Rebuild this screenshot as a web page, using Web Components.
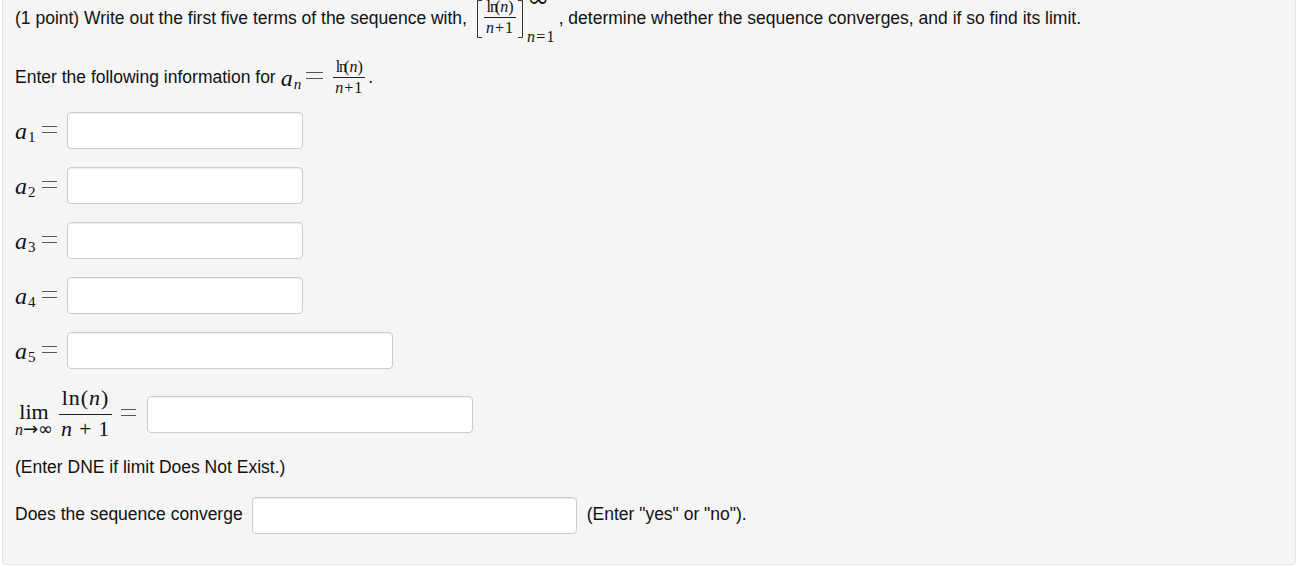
<!DOCTYPE html>
<html>
<head>
<meta charset="utf-8">
<title>Sequence problem</title>
<style>
  html, body { margin:0; padding:0; background:#fff; }
  body { font-family:"Liberation Sans", Arial, sans-serif; font-size:17.5px; color:#111; height:567px; overflow:hidden; }
</style>
</head>
<body>
<hw-well>
  <hw-row style="height:36px">
    <span>(1 point) Write out the first five terms of the sequence with,</span>
    <hw-seq style="margin-left:9px"></hw-seq>
    <span style="margin-left:3px">, determine whether the sequence converges, and if so find its limit.</span>
  </hw-row>
  <hw-row style="height:46px;margin-top:18px">
    <span>Enter the following information for</span>
    <hw-var name="a" sub="n" style="margin-left:5px"></hw-var>
    <hw-eq width="17" style="margin-left:5px"></hw-eq>
    <hw-frac size="16" style="margin-left:10px;margin-top:2px"><hw-ln slot="top"></hw-ln><span slot="bottom" style="letter-spacing:1px"><i>n</i>+1</span></hw-frac>
    <span style="margin-left:3px">.</span>
  </hw-row>
  <hw-term name="a" sub="1" width="236" style="margin-top:12px"></hw-term>
  <hw-term name="a" sub="2" width="236" style="margin-top:18px"></hw-term>
  <hw-term name="a" sub="3" width="236" style="margin-top:18px"></hw-term>
  <hw-term name="a" sub="4" width="236" style="margin-top:18px"></hw-term>
  <hw-term name="a" sub="5" width="326" style="margin-top:18px"></hw-term>
  <hw-row style="height:50px;margin-top:20px">
    <hw-lim></hw-lim>
    <hw-frac size="22" lift="4" style="margin-left:6px;margin-top:-2px"><span slot="top" style="letter-spacing:1px">ln(<i>n</i>)</span><span slot="bottom" style="letter-spacing:.7px"><i>n</i> + 1</span></hw-frac>
    <hw-eq style="margin-left:9px"></hw-eq>
    <hw-blank width="326" style="margin-left:11px"></hw-blank>
  </hw-row>
  <hw-row style="height:24px;margin-top:16px"><span>(Enter DNE if limit Does Not Exist.)</span></hw-row>
  <hw-row style="height:37px;margin-top:18px">
    <span style="margin-top:-2px">Does the sequence converge</span>
    <hw-blank width="325" style="margin-left:9px"></hw-blank>
    <span style="margin-left:10px;margin-top:-2px">(Enter "yes" or "no").</span>
  </hw-row>
</hw-well>

<script>
const serif = '"Liberation Serif","Times New Roman",serif';
const symbols = '"DejaVu Sans",sans-serif';

customElements.define('hw-well', class extends HTMLElement {
  connectedCallback() {
    this.attachShadow({ mode: 'open' });
    this.shadowRoot.innerHTML = `
      <style>
        :host { display:block; box-sizing:border-box; margin:0 12px 0 2px; height:565px; padding:0 12px;
          background:#f5f5f5; border:1px solid #e3e3e3; border-top:none; border-radius:0 0 4px 4px; }
      </style>
      <slot></slot>`;
  }
});

customElements.define('hw-row', class extends HTMLElement {
  connectedCallback() {
    this.attachShadow({ mode: 'open' });
    this.shadowRoot.innerHTML = `
      <style>:host { display:flex; align-items:center; white-space:nowrap; }</style>
      <slot></slot>`;
  }
});

customElements.define('hw-blank', class extends HTMLElement {
  connectedCallback() {
    this.attachShadow({ mode: 'open' });
    const w = this.getAttribute('width');
    this.shadowRoot.innerHTML = `
      <style>
        :host { display:block; flex:none; }
        input { display:block; box-sizing:border-box; width:${w}px; height:37px; margin:0; padding:4px 6px;
          background:#fff; border:1px solid #ccc; border-radius:4px; outline:none;
          box-shadow:inset 0 1px 1px rgba(0,0,0,.075); }
      </style>
      <input type="text">`;
  }
});

customElements.define('hw-var', class extends HTMLElement {
  connectedCallback() {
    this.attachShadow({ mode: 'open' });
    const sub = this.getAttribute('sub');
    const subStyle = /\d/.test(sub) ? 'normal' : 'italic';
    this.shadowRoot.innerHTML = `
      <style>
        :host { display:inline-flex; align-items:baseline; font-family:${serif}; flex:none; margin-top:2px; }
        i { font-size:24px; }
        sub { font-size:15px; font-style:${subStyle}; vertical-align:baseline; position:relative; top:3px; margin-left:1px; }
      </style>
      <i>${this.getAttribute('name')}</i><sub>${sub}</sub>`;
  }
});

customElements.define('hw-eq', class extends HTMLElement {
  connectedCallback() {
    this.attachShadow({ mode: 'open' });
    const w = this.getAttribute('width') || 15;
    this.shadowRoot.innerHTML = `
      <style>
        :host { display:block; flex:none; margin-top:-3px; }
        svg { display:block; }
      </style>
      <svg width="${w}" height="7" viewBox="0 0 ${w} 7"><path d="M0 .5h${w}M0 6.500h${w}" stroke="#555" stroke-width="1" fill="none"/></svg>`;
  }
});

customElements.define('hw-ln', class extends HTMLElement {
  connectedCallback() {
    this.attachShadow({ mode: 'open' });
    this.shadowRoot.innerHTML = `
      <style>
        :host { display:inline-block; }
        .l { letter-spacing:-1px; }
        .n { letter-spacing:-3px; }
      </style>
      <span class="l">l</span><span class="n">n</span>(<i>n</i>)`;
  }
});

customElements.define('hw-frac', class extends HTMLElement {
  connectedCallback() {
    this.attachShadow({ mode: 'open' });
    const s = this.getAttribute('size'), lift = this.getAttribute('lift') || 1;
    this.shadowRoot.innerHTML = `
      <style>
        :host { display:inline-flex; flex-direction:column; align-items:stretch; text-align:center; flex:none;
          font-family:${serif}; font-size:${s}px; line-height:1.05; }
        .top { padding:0 2px ${lift}px; border-bottom:1px solid #222; }
        .bottom { padding:2px 2px 0; }
      </style>
      <div class="top"><slot name="top"></slot></div>
      <div class="bottom"><slot name="bottom"></slot></div>`;
  }
});

customElements.define('hw-term', class extends HTMLElement {
  connectedCallback() {
    this.attachShadow({ mode: 'open' });
    const name = this.getAttribute('name'), sub = this.getAttribute('sub'), w = this.getAttribute('width');
    this.shadowRoot.innerHTML = `
      <style>
        :host { display:flex; align-items:center; height:37px; }
        .label { display:flex; align-items:center; justify-content:space-between; width:42px; }
        hw-blank { margin-left:10px; }
      </style>
      <div class="label"><hw-var name="${name}" sub="${sub}"></hw-var><hw-eq></hw-eq></div>
      <hw-blank width="${w}"></hw-blank>`;
  }
});

customElements.define('hw-lim', class extends HTMLElement {
  connectedCallback() {
    this.attachShadow({ mode: 'open' });
    this.shadowRoot.innerHTML = `
      <style>
        :host { display:inline-flex; flex-direction:column; align-items:center; flex:none; font-family:${serif}; padding-top:10px; }
        .lim { font-size:22px; line-height:20px; }
        .under { font-size:16px; line-height:13px; white-space:nowrap; }
        .sym { font-family:${symbols}; font-size:18px; line-height:13px; }
      </style>
      <div class="lim">lim</div>
      <div class="under"><i>n</i><span class="sym">→∞</span></div>`;
  }
});

customElements.define('hw-seq', class extends HTMLElement {
  connectedCallback() {
    this.attachShadow({ mode: 'open' });
    this.shadowRoot.innerHTML = `
      <style>
        :host { display:inline-flex; align-items:center; height:40px; flex:none; font-family:${serif}; margin-top:2px; }
        svg { display:block; flex:none; }
        .limits { display:flex; flex-direction:column; justify-content:space-between; height:44px; margin:4px 0 0 3px; font-size:16px; line-height:13px; letter-spacing:1.2px; }
        .sup { font-family:${symbols}; font-size:27px; line-height:8px; height:8px; margin-top:-5px; letter-spacing:0; }
      </style>
      <svg width="7" height="38" viewBox="0 0 7 38"><path d="M6 .5H1.500v37H6" fill="none" stroke="#333"/></svg>
      <hw-frac size="16" style="margin:-3px 1px 0"><hw-ln slot="top"></hw-ln><span slot="bottom" style="letter-spacing:1px"><i>n</i>+1</span></hw-frac>
      <svg width="7" height="38" viewBox="0 0 7 38"><path d="M1 .5h4.500v37H1" fill="none" stroke="#333"/></svg>
      <div class="limits"><div class="sup">∞</div><div><i>n</i>=1</div></div>`;
  }
});
</script>
</body>
</html>
